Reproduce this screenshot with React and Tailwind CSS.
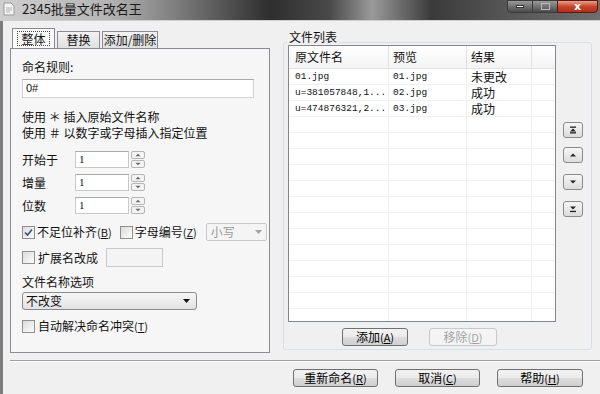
import React from 'react';

const font = "font-['Noto_Sans_CJK_SC','Noto_Sans',sans-serif]";

const Key = ({ k }) => (
  <span className="text-[11px] whitespace-nowrap">
    (<span className="underline">{k}</span>)
  </span>
);

const Check = ({ checked }) => (
  <span className="w-[13px] h-[13px] border border-[#8f8f8f] bg-[linear-gradient(135deg,#dcdcdc,#fdfdfd)] flex items-center justify-center shrink-0">
    {checked && (
      <svg width="9" height="9" viewBox="0 0 9 9">
        <path d="M1 4.5 L3.5 7 L8 1.5" stroke="#3a4f7a" strokeWidth="1.6" fill="none" />
      </svg>
    )}
  </span>
);

const Spin = () => (
  <div className="flex flex-col gap-[1px] ml-[2px]">
    {['M1 5 L4 2 L7 5', 'M1 2 L4 5 L7 2'].map((d, i) => (
      <div key={i} className="w-[14px] h-[8px] border border-[#b5b5b5] rounded-[2px] bg-[#f4f4f4] flex items-center justify-center">
        <svg width="8" height="6" viewBox="0 0 8 7">
          <path d={d} fill="#6a6a6a" />
        </svg>
      </div>
    ))}
  </div>
);

const NumRow = ({ label, mt }) => (
  <div className={`flex items-center ${mt}`}>
    <span className="w-[53px]">{label}</span>
    <div className="w-[54px] h-[17px] bg-white border border-[#c9c9c9] border-t-[#a9a9a9] pl-[3px] text-[11px] leading-[15px] font-['Liberation_Serif',serif]">1</div>
    <Spin />
  </div>
);

const Btn = ({ children, w, disabled }) => (
  <button
    className={`${w} h-[18px] rounded-[3px] border text-[12px] leading-[16px] flex items-center justify-center whitespace-nowrap ${
      disabled
        ? 'border-[#c9c9c9] bg-[#f4f4f4] text-[#a3a3a3]'
        : 'border-[#707070] bg-[linear-gradient(#f2f2f2,#ebebeb_50%,#dddddd_51%,#cfcfcf)] text-black'
    }`}
  >
    {children}
  </button>
);

const SideBtn = ({ kind }) => (
  <div className="w-[20px] h-[16px] rounded-[3px] border border-[#8a8a8a] bg-[linear-gradient(#f6f6f6,#dcdcdc)] flex items-center justify-center">
    <svg width="10" height="8" viewBox="0 0 10 8">
      {kind === 'top' && (
        <>
          <rect x="2" y="0.5" width="6" height="1.3" fill="#222" />
          <path d="M5 2.5 L8 5.5 L2 5.5Z" fill="#222" />
          <rect x="2" y="6.2" width="6" height="1.3" fill="#222" />
        </>
      )}
      {kind === 'up' && <path d="M5 2.5 L8 5.5 L2 5.5Z" fill="#222" />}
      {kind === 'down' && <path d="M2 2.5 L8 2.5 L5 5.5Z" fill="#222" />}
      {kind === 'bottom' && (
        <>
          <path d="M2 1.5 L8 1.5 L5 4.5Z" fill="#222" />
          <rect x="2" y="5.8" width="6" height="1.3" fill="#222" />
        </>
      )}
    </svg>
  </div>
);

const rows = [
  ['01.jpg', '01.jpg', '未更改'],
  ['u=381057848,1...', '02.jpg', '成功'],
  ['u=474876321,2...', '03.jpg', '成功'],
];

export default function App() {
  return (
    <div className={`w-[600px] h-[394px] overflow-hidden flex flex-col text-[12px] text-[#111] ${font}`}>
      {/* title bar */}
      <div className="h-[21px] shrink-0 flex items-start bg-[linear-gradient(to_right,#cfcfcf_0%,#b4b4b4_18%,#7a7a7a_30%,#2e2e2e_45%,#4a4a4a_55%,#9a9a9a_62%,#3a3a3a_72%,#555555_84%,#6e6e6e_100%)] border-b border-[#cfcfcf]">
        <svg width="12" height="14" viewBox="0 0 12 14" className="ml-[3px] mt-[2px]">
          <path d="M1 1 H8 L11 4 V13 H1Z" fill="#f4f4f4" stroke="#9a9a9a" />
          <path d="M3 6 H9 M3 8 H9 M3 10 H7" stroke="#b0b0b0" />
        </svg>
        <span className="ml-[7px] mt-[1px] text-[13px] leading-[16px] text-[#1a1a1a]">2345批量文件改名王</span>
        <div className="ml-auto flex h-[13px] mr-[2px]">
          <div className="w-[26px] border border-[#3a3a3a] rounded-bl-[4px] bg-[linear-gradient(#9a9a9a,#4a4a4a)] flex items-center justify-center">
            <span className="w-[8px] h-[3px] bg-white border border-[#333]" />
          </div>
          <div className="w-[24px] border-y border-[#3a3a3a] bg-[linear-gradient(#9a9a9a,#4a4a4a)] flex items-center justify-center">
            <span className="w-[9px] h-[7px] border border-[#bbb]" />
          </div>
          <div className="w-[41px] border border-[#5a1a10] rounded-br-[4px] bg-[linear-gradient(#e8a08a,#c84530_50%,#b0301c)] flex items-center justify-center text-white text-[11px] font-bold leading-none font-['DejaVu_Sans',sans-serif]">
            x
          </div>
        </div>
      </div>

      {/* body */}
      <div className="flex-1 flex flex-col bg-[#f0f0f0] border-l-[3px] border-[#7d7d7d]">
        <div className="flex pt-[8px] pl-[7px]">
          {/* left tab panel */}
          <div className="w-[260px] flex flex-col">
            <div className="flex items-end h-[19px] pl-[2px] relative z-10">
              <div className="w-[43px] h-[20px] bg-[#fafafa] border border-[#898c95] border-b-0 flex items-center justify-center">
                <span className="border border-dotted border-[#444] px-[3px] leading-[13px]">整体</span>
              </div>
              <div className="w-[43px] h-[17px] ml-[2px] border border-[#898c95] border-b-0 bg-[linear-gradient(#f2f2f2,#e0e0e0)] flex items-center justify-center leading-none">替换</div>
              <div className="w-[56px] h-[17px] ml-[2px] border border-[#898c95] border-b-0 bg-[linear-gradient(#f2f2f2,#e0e0e0)] flex items-center justify-center leading-none">添加/删除</div>
            </div>
            <div className="h-[305px] border border-[#898c95] bg-[#f6f6f6] pl-[11px] flex flex-col leading-[14px]">
              <div className="mt-[11px] h-[14px]">命名规则:</div>
              <div className="mt-[5px] w-[232px] h-[19px] bg-white border border-[#d2d2d2] border-t-[#a9a9a9] pl-[3px] text-[11px] leading-[17px] font-['Liberation_Sans',sans-serif]">0#</div>
              <div className="mt-[12px] h-[14px]">使用 ＊ 插入原始文件名称</div>
              <div className="mt-[2px] h-[14px]">使用 ＃ 以数字或字母插入指定位置</div>
              <NumRow label="开始于" mt="mt-[11px]" />
              <NumRow label="增量" mt="mt-[6px]" />
              <NumRow label="位数" mt="mt-[6px]" />
              <div className="mt-[9px] h-[18px] flex items-center whitespace-nowrap">
                <Check checked />
                <span className="ml-[2px]">不足位补齐</span>
                <Key k="B" />
                <span className="ml-[8px]"><Check /></span>
                <span className="ml-[2px]">字母编号</span>
                <Key k="Z" />
                <div className="ml-[9px] w-[61px] h-[18px] shrink-0 border border-[#c9c9c9] rounded-[2px] bg-[#f4f4f4] flex items-center justify-between px-[4px] text-[#9a9a9a]">
                  <span>小写</span>
                  <svg width="7" height="4" viewBox="0 0 7 4"><path d="M0 0 H7 L3.5 4Z" fill="#a0a0a0" /></svg>
                </div>
              </div>
              <div className="mt-[7px] h-[19px] flex items-center">
                <Check />
                <span className="ml-[3px] w-[68px]">扩展名改成</span>
                <div className="w-[57px] h-[19px] border border-[#c9c9c9] bg-[#f4f4f4]" />
              </div>
              <div className="mt-[8px] h-[14px]">文件名称选项</div>
              <div className="mt-[3px] w-[175px] h-[18px] rounded-[3px] border border-[#8a8a8a] bg-[linear-gradient(#f6f6f6,#e2e2e2)] flex items-center justify-between pl-[3px] pr-[6px]">
                <span>不改变</span>
                <svg width="7" height="4" viewBox="0 0 7 4"><path d="M0 0 H7 L3.5 4Z" fill="#111" /></svg>
              </div>
              <div className="mt-[9px] h-[14px] flex items-center">
                <Check />
                <span className="ml-[3px]">自动解决命名冲突</span>
                <Key k="T" />
              </div>
            </div>
          </div>

          {/* right group */}
          <div className="ml-[13px] w-[309px] mt-[13px] h-[308px] border border-[#d5dfe5] rounded-[3px] relative flex flex-col">
            <span className="absolute -top-[13px] left-[3px] px-[2px] bg-[#f0f0f0] leading-[14px] text-[12px]">文件列表</span>
            <div className="flex mt-[2px] ml-[4px]">
              <div className="w-[268px] h-[277px] border border-[#828790] bg-white flex flex-col overflow-hidden">
                <div className="h-[23px] flex shrink-0 border-b border-[#e5e5e5] bg-[linear-gradient(#ffffff,#f4f4f4)]">
                  <div className="w-[100px] border-r border-[#e0e0e0] pl-[6px] leading-[22px]">原文件名</div>
                  <div className="w-[78px] border-r border-[#e0e0e0] pl-[4px] leading-[22px]">预览</div>
                  <div className="w-[65px] border-r border-[#e0e0e0] pl-[4px] leading-[22px]">结果</div>
                  <div className="flex-1" />
                </div>
                {Array.from({ length: 16 }).map((_, i) => {
                  const r = rows[i];
                  return (
                    <div key={i} className="h-[16px] flex shrink-0 border-b border-[#f0f0f0]">
                      <div className="w-[100px] border-r border-[#f0f0f0] pl-[6px] text-[9.5px] leading-[15px] font-['Liberation_Mono',monospace] whitespace-nowrap overflow-hidden">{r ? r[0] : ''}</div>
                      <div className="w-[78px] border-r border-[#f0f0f0] pl-[4px] text-[9.5px] leading-[15px] font-['Liberation_Mono',monospace]">{r ? r[1] : ''}</div>
                      <div className="w-[65px] border-r border-[#f0f0f0] pl-[4px] leading-[15px]">{r ? r[2] : ''}</div>
                      <div className="flex-1" />
                    </div>
                  );
                })}
              </div>
              <div className="ml-[7px] flex flex-col">
                <div className="mt-[77px]"><SideBtn kind="top" /></div>
                <div className="mt-[9px]"><SideBtn kind="up" /></div>
                <div className="mt-[11px]"><SideBtn kind="down" /></div>
                <div className="mt-[11px]"><SideBtn kind="bottom" /></div>
              </div>
            </div>
            <div className="flex mt-[6px] ml-[58px] gap-[21px]">
              <Btn w="w-[66px]">添加<Key k="A" /></Btn>
              <Btn w="w-[68px]" disabled>移除<Key k="D" /></Btn>
            </div>
          </div>
        </div>

        <div className="mt-[7px] ml-[7px] h-[2px] border-t border-[#a0a0a0] border-b border-b-white" />

        <div className="flex mt-[7px] ml-[290px] gap-[17px]">
          <Btn w="w-[85px]">重新命名<Key k="R" /></Btn>
          <Btn w="w-[85px]">取消<Key k="C" /></Btn>
          <Btn w="w-[86px]">帮助<Key k="H" /></Btn>
        </div>
      </div>
    </div>
  );
}
